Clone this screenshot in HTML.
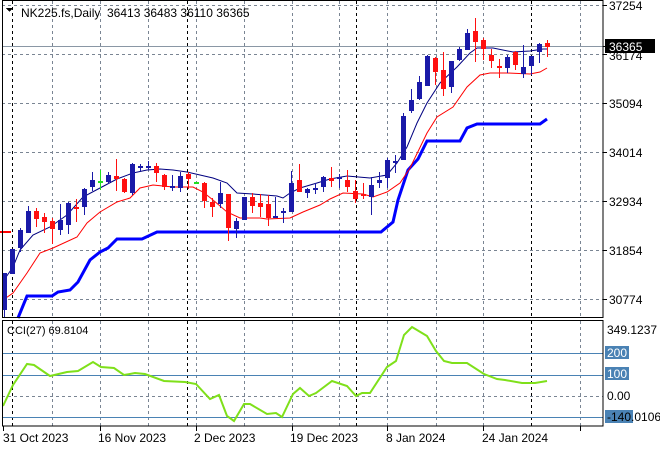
<!DOCTYPE html>
<html><head><meta charset="utf-8"><style>
body{margin:0;width:660px;height:450px;background:#fff;overflow:hidden;font-family:"Liberation Sans",sans-serif;}
svg{position:absolute;left:0;top:0}
text{font-family:"Liberation Sans",sans-serif;font-size:12px;fill:#000}
</style></head><body>
<svg id="s" width="660" height="450" viewBox="0 0 660 450" shape-rendering="crispEdges">
<g id="grid" stroke="#7a8593" stroke-dasharray="3,3" stroke-width="1"></g>
<line x1="2" y1="46.5" x2="603" y2="46.5" stroke="#8a97a5"/>
<g id="lines" fill="none" shape-rendering="auto"></g>
<g id="candles"></g>
<line x1="2" y1="353.5" x2="603" y2="353.5" stroke="#4a82b4"/>
<line x1="2" y1="375.5" x2="603" y2="375.5" stroke="#4a82b4"/>
<line x1="2" y1="396.5" x2="603" y2="396.5" stroke="#7a8593" stroke-dasharray="3,3"/>
<line x1="2" y1="417.5" x2="603" y2="417.5" stroke="#4a82b4"/>
<polyline shape-rendering="auto" fill="none" stroke="#7fe01a" stroke-width="2" points="3,406 13,385 27,364 34,365 50,376 67,372 78,371 93,362 101,367 114,368 124,375 135,373 145,374 164,381 185,382 196,384 210,399 219,395 227,416 234,421 244,404 250,404 267,414 276,413 282,417 293,394 300,388 309,396 316,393 332,381 347,386 356,396 362,393 370,393 387,367 396,361 404,335 412,327 427,336 436,351 444,361 452,363 467,363 484,374 497,379 505,380 522,383 535,383 547,381"/>
<rect x="2.5" y="0.5" width="600.5" height="317" fill="none" stroke="#000"/>
<rect x="2.5" y="320.5" width="600.5" height="105.5" fill="none" stroke="#000"/>
<g id="ticks" stroke="#000"></g>
<text x="609" y="10">37254</text>
<text x="609" y="60">36174</text>
<text x="609" y="108">35094</text>
<text x="609" y="157">34014</text>
<text x="609" y="206">32934</text>
<text x="609" y="255">31854</text>
<text x="609" y="304">30774</text>
<rect x="605" y="39" width="50" height="14" fill="#000"/>
<text x="609" y="51" style="fill:#fff">36365</text>
<text x="607" y="334">349.1237</text>
<rect x="605" y="346" width="24" height="13" fill="#4a82b4"/>
<text x="607" y="357" style="fill:#fff">200</text>
<rect x="605" y="367" width="24" height="13" fill="#4a82b4"/>
<text x="607" y="378" style="fill:#fff">100</text>
<text x="607" y="400">0.00</text>
<rect x="605" y="410" width="28" height="13" fill="#4a82b4"/>
<text x="607" y="421">-140.0106</text>
<path d="M6 8 L13 8 L9.5 12 Z" fill="#000"/>
<text x="21" y="17" style="font-size:12px">NK225.fs,Daily</text>
<text x="107" y="17" style="font-size:12px">36413 36483 36110 36365</text>
<text x="7" y="334" style="font-size:11px">CCI(27) 69.8104</text>
<text x="3" y="442">31 Oct 2023</text>
<text x="98" y="442">16 Nov 2023</text>
<text x="194" y="442">2 Dec 2023</text>
<text x="290" y="442">19 Dec 2023</text>
<text x="386" y="442">8 Jan 2024</text>
<text x="482" y="442">24 Jan 2024</text>
</svg>
<script>
var NS="http://www.w3.org/2000/svg";
function el(p,t,a){var e=document.createElementNS(NS,t);for(var k in a)e.setAttribute(k,a[k]);p.appendChild(e);return e;}
var g=document.getElementById('grid');
[52,100,148,196,244,292,339,387,436,483,580].forEach(function(x){
 el(g,'line',{x1:x+.5,y1:1,x2:x+.5,y2:318});el(g,'line',{x1:x+.5,y1:321,x2:x+.5,y2:426});});
[12,187,356,531].forEach(function(x){
 el(g,'line',{x1:x+.5,y1:1,x2:x+.5,y2:318,stroke:'#000'});el(g,'line',{x1:x+.5,y1:321,x2:x+.5,y2:426,stroke:'#000'});});
[5,54,103,152,201,250,299].forEach(function(y){el(g,'line',{x1:2,y1:y+.5,x2:603,y2:y+.5});});
var tk=document.getElementById('ticks');
[5,54,103,152,201,250,299,46].forEach(function(y){el(tk,'line',{x1:603,y1:y+.5,x2:607,y2:y+.5});});
[3,100,196,292,387,483,580].forEach(function(x){el(tk,'line',{x1:x+.5,y1:426,x2:x+.5,y2:431});});
var L=document.getElementById('lines');
el(L,'polyline',{stroke:'#0000ff','stroke-width':3,points:"18,318 27,296 52,296 58,292 70,290 78,282 90,260 100,252 108,248 117,239 142,239 157,232 381,232 393,222 398,200 408,170 418,159 427,141 460,141 467,128 477,124 540,124 547,119"});
el(L,'line',{x1:0,y1:232,x2:11,y2:232,stroke:'#ff0000','stroke-width':2});
el(L,'polyline',{stroke:'#ff0000','stroke-width':1,points:"3,300 13,293 27,273 40,253 53,248 77,237 87,223 100,212 117,202 130,198 140,188 153,185 173,187 193,187 203,192 213,200 227,212 240,218 260,218 267,219 290,218 303,212 320,205 330,199 343,193 363,194 373,197 387,192 400,183 410,168 427,133 437,117 453,107 467,87 480,75 490,73 507,73 530,74 540,72 547,68"});
el(L,'polyline',{stroke:'#000080','stroke-width':1,points:"4,280 13,267 20,250 33,235 50,227 67,215 83,197 100,188 117,179 133,173 147,170 160,169 173,170 187,172 200,175 213,178 227,183 237,193 253,194 277,196 283,198 290,193 300,188 317,183 330,179 347,176 370,178 387,175 397,163 407,147 417,123 427,103 440,83 457,67 470,53 477,48 493,48 513,52 530,51 543,49 547,49"});
var C=[['b',273,273,310,318],['b',249,249,274,274],['b',228,230,248,252],['b',206,211,233,233],['r',208,211,219,227],['r',213,217,222,233],['r',218,221,229,244],['b',204,220,230,235],['b',202,203,225,234],['r',199,207,209,222],['b',188,189,207,215],['b',172,180,187,191],['g',170,181,181,190],['b',172,175,182,184],['r',159,176,179,191],['r',178,179,192,193],['b',163,164,193,195],['b',164,166,166,171],['b',161,166,166,170],['r',163,166,173,182],['r',174,175,187,190],['b',175,186,186,191],['b',172,176,188,192],['r',172,174,179,189],['g',182,182,182,183],['r',182,183,201,208],['r',198,202,207,217],['b',182,193,204,208],['r',194,194,228,241],['b',218,221,229,238],['b',197,197,220,220],['r',193,197,206,213],['r',194,203,207,217],['r',195,204,218,226],['b',197,216,216,218],['b',208,211,213,223],['b',171,183,212,212],['r',164,180,192,192],['b',188,189,193,198],['b',183,188,188,194],['b',176,177,187,192],['r',167,178,181,187],['b',174,177,179,188],['r',170,180,187,192],['r',180,191,199,203],['r',183,194,194,199],['b',177,185,197,215],['b',172,180,183,188],['b',158,160,178,188],['b',155,161,161,173],['b',113,116,160,160],['b',89,100,111,113],['b',76,82,99,100],['b',55,56,86,86],['r',57,58,72,85],['r',52,70,89,96],['b',61,61,87,93],['b',47,49,60,61],['b',29,33,50,50],['r',18,31,42,62],['r',38,40,49,60],['r',49,55,61,68],['r',59,66,66,78],['b',55,57,68,73],['r',51,52,65,70],['b',45,67,74,78],['b',56,56,66,75],['b',43,44,52,63],['r',40,43,47,57]];
var cg=document.getElementById('candles');
var col={b:'#1a1aa8',r:'#ff1010',g:'#22dd22'};
C.forEach(function(c,i){var x=Math.round(4+i*7.985);var k=col[c[0]];
 el(cg,'rect',{x:x,y:c[1],width:1,height:Math.max(1,c[4]-c[1]),fill:k});
 var h=c[3]-c[2];
 if(h<2) el(cg,'rect',{x:x-2,y:c[2],width:5,height:2,fill:k});
 else el(cg,'rect',{x:x-2,y:c[2],width:5,height:h,fill:k});});
</script>
</body></html>
